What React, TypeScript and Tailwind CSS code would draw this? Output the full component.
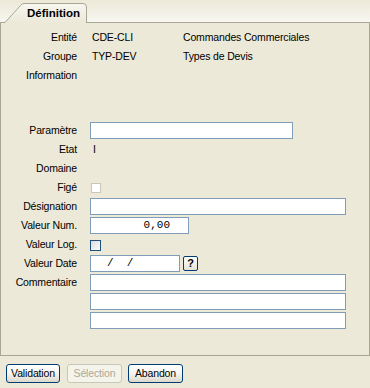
import React from 'react';

const inputCls = 'h-[17px] border border-[#7f9db9] bg-white';

function Row({ label, children }: { label?: string; children?: React.ReactNode }) {
  return (
    <div className="flex h-[19px] items-center">
      <div className="w-[76px] text-right whitespace-nowrap">{label}</div>
      <div className="ml-[13px] flex flex-1 items-center">{children}</div>
    </div>
  );
}

function XpButton({ label, disabled, w }: { label: string; disabled?: boolean; w: string }) {
  return (
    <button
      disabled={disabled}
      className={
        disabled
          ? `h-[19px] ${w} rounded-[3px] border border-[#c9c7ba] bg-[#f5f4ea] text-[#aca899]`
          : `h-[19px] ${w} rounded-[3px] border border-[#003c74] bg-gradient-to-b from-white via-[#f5f4ef] to-[#dcd8cb] text-black`
      }
    >
      {label}
    </button>
  );
}

export default function App() {
  return (
    <div className="flex h-[388px] w-[370px] flex-col bg-[#ece9d8] font-['Liberation_Sans',Arial,sans-serif] text-[10.5px] leading-none tracking-[-0.15px] text-black">
      {/* tab strip */}
      <div className="flex h-[23px] bg-gradient-to-b from-[#ece9d8] to-[#f8f7f2]">
        <div className="w-[5px] border-b border-[#a9a694]" />
        <div className="relative h-[23px] w-[82px]">
          <svg className="absolute inset-0" width="82" height="23" viewBox="0 0 82 23">
            <defs>
              <linearGradient id="tabg" x1="0" y1="0" x2="0" y2="1">
                <stop offset="0" stopColor="#f7f6f0" />
                <stop offset="1" stopColor="#ece9d8" />
              </linearGradient>
            </defs>
            <path d="M0 23 L0 22.5 L15.5 5.5 Q17 3.5 19 3.5 L78 3.5 Q81.5 3.5 81.5 7 L81.5 23 Z" fill="url(#tabg)" />
            <path d="M0 22.5 L15.5 5.5 Q17 3.5 19 3.5 L78 3.5 Q81.5 3.5 81.5 7 L81.5 23" fill="none" stroke="#a9a694" strokeWidth="1" />
          </svg>
          <div className="relative pl-[22px] pt-[8px] text-[11.5px] font-bold tracking-normal">Définition</div>
        </div>
        <div className="flex-1 border-b border-[#a9a694]" />
      </div>

      {/* panel */}
      <div className="flex flex-1 flex-col border-x border-b border-[#a9a694] pt-[5px]">
        <div className="flex h-[19px] items-center">
          <div className="w-[76px] text-right">Entité</div>
          <div className="ml-[13px] w-[93px] pl-[2px]">CDE-CLI</div>
          <div>Commandes Commerciales</div>
        </div>
        <div className="flex h-[19px] items-center">
          <div className="w-[76px] text-right">Groupe</div>
          <div className="ml-[13px] w-[93px] pl-[2px]">TYP-DEV</div>
          <div>Types de Devis</div>
        </div>
        <div className="flex h-[19px] items-center">
          <div className="w-[76px] text-right">Information</div>
        </div>

        <div className="mt-[36px]">
          <Row label="Paramètre">
            <div className={`${inputCls} w-[203px]`} />
          </Row>
          <Row label="Etat">
            <span className="pl-[3px]">I</span>
          </Row>
          <Row label="Domaine" />
          <Row label="Figé">
            <div className="ml-[1px] h-[10px] w-[10px] border border-[#cac8bb] bg-white" />
          </Row>
          <Row label="Désignation">
            <div className={`${inputCls} w-[256px]`} />
          </Row>
          <Row label="Valeur Num.">
            <div className={`${inputCls} flex w-[99px] items-center justify-end pr-[18px] font-['Liberation_Mono',monospace] text-[11px] tracking-normal`}>
              0,00
            </div>
          </Row>
          <Row label="Valeur Log.">
            <div className="mt-[1px] h-[11px] w-[11px] border border-[#1c5180] bg-gradient-to-br from-[#dcdcd7] to-white" />
          </Row>
          <Row label="Valeur Date">
            <div className={`${inputCls} flex w-[90px] items-center whitespace-pre pl-[16px] font-['Liberation_Mono',monospace] text-[11px] tracking-normal`}>
              {'/  /'}
            </div>
            <div className="ml-[3px] flex h-[15px] w-[15px] items-center justify-center rounded-[2px] border border-[#003c74] bg-gradient-to-b from-white to-[#e6e3d6] text-[11px] font-bold">
              ?
            </div>
          </Row>
          <Row label="Commentaire">
            <div className={`${inputCls} w-[256px]`} />
          </Row>
          <Row>
            <div className={`${inputCls} w-[256px]`} />
          </Row>
          <Row>
            <div className={`${inputCls} w-[256px]`} />
          </Row>
        </div>
      </div>

      {/* buttons */}
      <div className="flex h-[32px] items-start pl-[6px] pt-[8px]">
        <XpButton label="Validation" w="w-[54px]" />
        <div className="w-[7px]" />
        <XpButton label="Sélection" w="w-[55px]" disabled />
        <div className="w-[6px]" />
        <XpButton label="Abandon" w="w-[55px]" />
      </div>
    </div>
  );
}
